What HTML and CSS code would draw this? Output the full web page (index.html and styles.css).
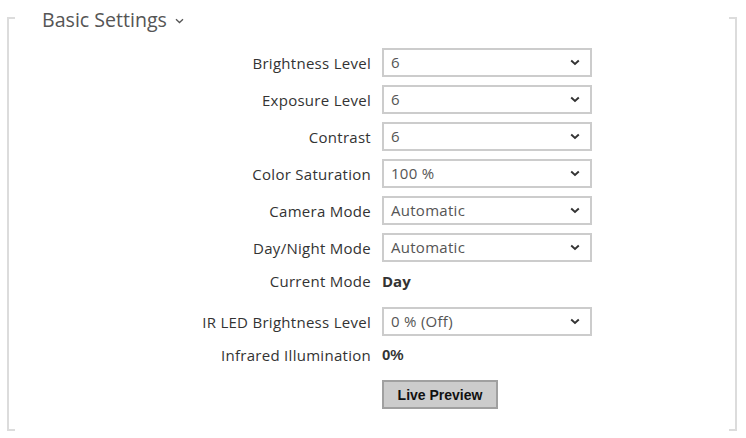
FILE: index.html
```html
<!DOCTYPE html>
<html>
<head>
<meta charset="utf-8">
<link rel="stylesheet" href="styles.css">
</head>
<body>
<div class="panel">
  <div class="title">Basic Settings <svg class="title-chev" width="9" height="6" viewBox="0 0 9 6"><path d="M1 1.2 L4.5 4.5 L8 1.2" fill="none" stroke="#555" stroke-width="1.3"/></svg></div>
  <div class="form">
    <div class="label">Brightness Level</div>
    <div class="select"><span>6</span><svg width="10" height="7" viewBox="0 0 10 7"><path d="M1.2 1.5 L5 5 L8.8 1.5" fill="none" stroke="#333" stroke-width="1.9"/></svg></div>
    <div class="label">Exposure Level</div>
    <div class="select"><span>6</span><svg width="10" height="7" viewBox="0 0 10 7"><path d="M1.2 1.5 L5 5 L8.8 1.5" fill="none" stroke="#333" stroke-width="1.9"/></svg></div>
    <div class="label">Contrast</div>
    <div class="select"><span>6</span><svg width="10" height="7" viewBox="0 0 10 7"><path d="M1.2 1.5 L5 5 L8.8 1.5" fill="none" stroke="#333" stroke-width="1.9"/></svg></div>
    <div class="label">Color Saturation</div>
    <div class="select"><span>100 %</span><svg width="10" height="7" viewBox="0 0 10 7"><path d="M1.2 1.5 L5 5 L8.8 1.5" fill="none" stroke="#333" stroke-width="1.9"/></svg></div>
    <div class="label">Camera Mode</div>
    <div class="select"><span>Automatic</span><svg width="10" height="7" viewBox="0 0 10 7"><path d="M1.2 1.5 L5 5 L8.8 1.5" fill="none" stroke="#333" stroke-width="1.9"/></svg></div>
    <div class="label">Day/Night Mode</div>
    <div class="select"><span>Automatic</span><svg width="10" height="7" viewBox="0 0 10 7"><path d="M1.2 1.5 L5 5 L8.8 1.5" fill="none" stroke="#333" stroke-width="1.9"/></svg></div>
    <div class="label text-row">Current Mode</div>
    <div class="value text-row">Day</div>
    <div class="label group-start">IR LED Brightness Level</div>
    <div class="select group-start"><span>0 % (Off)</span><svg width="10" height="7" viewBox="0 0 10 7"><path d="M1.2 1.5 L5 5 L8.8 1.5" fill="none" stroke="#333" stroke-width="1.9"/></svg></div>
    <div class="label text-row">Infrared Illumination</div>
    <div class="value text-row value-arial">0%</div>
    <div class="label"></div>
    <div class="actions"><button class="btn">Live Preview</button></div>
  </div>
</div>
</body>
</html>
```

FILE: styles.css
```css
html, body {
  margin: 0;
  padding: 0;
  background: #fff;
}
body {
  font-family: "Open Sans", "Noto Sans", sans-serif;
  color: #333;
}
.panel {
  width: 730px;
  height: 432px;
  margin: 0 9px 0 7px;
  box-sizing: border-box;
  background:
    linear-gradient(#dcdcdc, #dcdcdc) left 0 top 17px / 2px 414px no-repeat,
    linear-gradient(#dcdcdc, #dcdcdc) left 0 top 17px / 8px 2px no-repeat,
    linear-gradient(#dcdcdc, #dcdcdc) left 0 top 429px / 8px 2px no-repeat,
    linear-gradient(#dcdcdc, #dcdcdc) right 0 top 17px / 2px 414px no-repeat,
    linear-gradient(#dcdcdc, #dcdcdc) right 0 top 17px / 8px 2px no-repeat,
    linear-gradient(#dcdcdc, #dcdcdc) right 0 top 429px / 8px 2px no-repeat;
  padding-top: 6px;
}
.title {
  padding-left: 35px;
  font-size: 19.6px;
  line-height: 28px;
  height: 28px;
  color: #555;
  display: flex;
  align-items: center;
  gap: 8px;
}
.title-chev {
  margin-top: 2px;
}
.form {
  margin-top: 14px;
  display: grid;
  grid-template-columns: 364px 210px;
  column-gap: 11px;
  row-gap: 8px;
  font-size: 15px;
  letter-spacing: 0.28px;
}
.label {
  text-align: right;
  display: flex;
  align-items: center;
  justify-content: flex-end;
  height: 29px;
  white-space: nowrap;
}
.select {
  height: 29px;
  box-sizing: border-box;
  border: 2px solid #cccccc;
  display: flex;
  align-items: center;
  justify-content: space-between;
  padding: 0 10px 0 7px;
  color: #555;
}
.select span {
  position: relative;
  top: -1px;
}
.text-row {
  height: 21px;
}
.value {
  display: flex;
  align-items: center;
  font-weight: 700;
  color: #333;
  letter-spacing: 0;
}
.value-arial {
  font-family: "Liberation Sans", Arial, sans-serif;
}
.group-start {
  margin-top: 8px;
}
.actions {
  margin-top: 7px;
}
.btn {
  width: 116px;
  height: 29px;
  box-sizing: border-box;
  border: 2px solid #a0a0a0;
  background: #cccccc;
  font-family: "Liberation Sans", Arial, sans-serif;
  font-weight: 700;
  font-size: 14px;
  letter-spacing: 0;
  color: #111;
  padding: 0;
  margin: 0;
}
```
